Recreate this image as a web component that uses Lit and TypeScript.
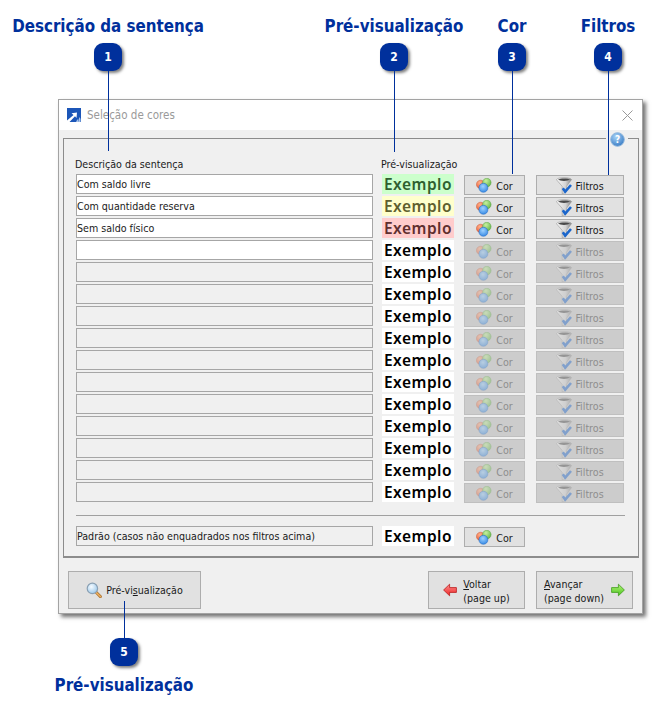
import { LitElement, html, css, svg } from "lit";
import { customElement } from "lit/decorators.js";

const colorIcon = svg`<svg class="ico" width="16" height="15" viewBox="0 0 16 15">
  <circle cx="4.6" cy="6.4" r="4.2" fill="url(#gr)" stroke="#c0502a" stroke-width=".4"/>
  <circle cx="10.8" cy="4.6" r="4.3" fill="url(#gg)" stroke="#4f9a3a" stroke-width=".4"/>
  <circle cx="7.4" cy="9.8" r="4.5" fill="url(#gb)" stroke="#1f69c4" stroke-width=".5"/>
</svg>`;
const filterIcon = svg`<svg class="ico" width="17" height="17" viewBox="0 0 17 17">
  <path d="M.4 2.6C1.5 0 14.5 0 15.6 2.6L10.4 9.4V15L6.2 16.8V9.4Z" fill="url(#gf)" stroke="#8a8a8a" stroke-width=".5"/>
  <path d="M2 2.6C4 1 12 1 14 2.6 12 4.4 4 4.4 2 2.6Z" fill="#4a4a4a"/>
  <path d="M6.8 11.2 9.2 14.6 15 8" fill="none" stroke="#1b66cc" stroke-width="2.6"/>
</svg>`;
const lensIcon = svg`<svg width="16" height="16" viewBox="0 0 16 16">
  <path d="M9.6 9.8 14.4 14.6" stroke="#b07a3a" stroke-width="3" stroke-linecap="round"/>
  <path d="M10 10.2 14.4 14.6" stroke="#f2b25e" stroke-width="1.3" stroke-linecap="round"/>
  <circle cx="6.4" cy="6.4" r="5.2" fill="url(#gl)" stroke="#8aa0b4" stroke-width="1.2"/>
</svg>`;
const leftArrow = svg`<svg width="14" height="14" viewBox="0 0 14 14"><path d="M.6 7 6.6 1.2v3.4h6.8v4.8H6.6v3.4Z" fill="url(#ga)" stroke="#b81c1c" stroke-width=".8"/></svg>`;
const rightArrow = svg`<svg width="14" height="14" viewBox="0 0 14 14"><path d="M13.4 7 7.4 1.2v3.4H.6v4.8h6.8v3.4Z" fill="url(#gc)" stroke="#3f9a1c" stroke-width=".8"/></svg>`;

type Row = { text: string; state: "on" | "empty" | "off"; tint: string };
const rows: Row[] = [
  { text: "Com saldo livre", state: "on", tint: "green" },
  { text: "Com quantidade reserva", state: "on", tint: "yellow" },
  { text: "Sem saldo físico", state: "on", tint: "red" },
  { text: "", state: "empty", tint: "" },
  ...Array.from({ length: 11 }, () => ({ text: "", state: "off" as const, tint: "" })),
];
const callouts = [
  { n: 1, title: "Descrição da sentença", x: 108, lineH: 80 },
  { n: 2, title: "Pré-visualização", x: 394, lineH: 81 },
  { n: 3, title: "Cor", x: 512, lineH: 103 },
  { n: 4, title: "Filtros", x: 608, lineH: 104 },
];

@customElement("app-root")
export class AppRoot extends LitElement {
  static styles = css`
    :host { display: block; position: relative; width: 667px; height: 713px; background: #fff; overflow: hidden;
      font-family: "DejaVu Sans", sans-serif; font-stretch: condensed; font-size: 10.6px; color: #1a1a1a; }
    .defs { position: absolute; width: 0; height: 0; }
    .win { position: absolute; left: 58px; top: 99px; width: 585px; height: 515px; box-sizing: border-box;
      background: #f0f0f0; border: 1px solid #a3a3a3; box-shadow: 3px 3px 4px rgba(0,0,0,.55);
      display: flex; flex-direction: column; }
    .title { flex: none; height: 30px; background: #fff; display: flex; align-items: center; padding: 0 9px 0 8px; gap: 6px;
      color: #9a9a9a; font-size: 11.5px; }
    .title .grow { flex: 1; }
    .body { flex: none; position: relative; margin: 8px 3px 0 4px; height: 420px; box-sizing: border-box;
      border: 1px solid #8c8c8c; border-bottom-width: 2px; padding: 12px 0 0 12px; }
    .help { position: absolute; right: 10px; top: -7px; width: 22px; height: 16px; background: #f0f0f0;
      display: flex; justify-content: center; }
    .heads { display: flex; height: 23px; align-items: flex-start; padding-top: 6px; box-sizing: border-box; line-height: 14px; }
    .heads .a { width: 306px; margin-left: -1px; }
    .rows { display: flex; flex-direction: column; gap: 2px; }
    .row { display: flex; height: 20px; }
    .field { flex: none; width: 297px; height: 20px; box-sizing: border-box; border: 1px solid #a6a6a6; background: #fff;
      line-height: 19px; padding-left: 0; white-space: nowrap; overflow: hidden; margin-right: 9px; }
    .field.off { background: #f0f0f0; }
    .sample { flex: none; width: 72px; height: 20px; background: #fff; color: #000; font: 600 15.5px/21px "Noto Sans", sans-serif;
      font-stretch: normal; text-align: center; margin-right: 10px; letter-spacing: .5px; overflow: hidden; }
    .sample.green { background: #ccffcc; color: #2f5f2f; }
    .sample.yellow { background: #ffffcc; color: #5f5f2f; }
    .sample.red { background: #ffcccc; color: #5f2f2f; }
    .btn { flex: none; margin-top: 1px; height: 20px; box-sizing: border-box; border: 1px solid #adadad; background: #e1e1e1;
      display: flex; align-items: center; justify-content: center; gap: 4px; color: #1a1a1a; }
    .btn span { position: relative; top: 1px; }
    .btn.cor { width: 61px; margin-right: 11px; }
    .btn.fil { width: 88px; gap: 2px; }
    .btn.dis { background: #cccccc; border-color: #bfbfbf; color: #8e8e8e; }
    .btn.dis .ico { opacity: .42; }
    .sep { height: 0; border-top: 1px solid #a0a0a0; margin: 13px 13px 10px 0; width: 549px; }
    .foot { flex: 1; display: flex; padding: 13px 0 0 9px; box-sizing: border-box; }
    .big { height: 38px; box-sizing: border-box; border: 1px solid #adadad; background: #e1e1e1; display: flex; align-items: center; flex: none; }
    .big.prev { width: 133px; justify-content: center; gap: 4px; margin-right: 227px; }
    .big.back { width: 97px; margin-right: 11px; justify-content: center; gap: 6px; line-height: 14px; padding-top: 2px; }
    .big.next { width: 97px; justify-content: center; gap: 7px; line-height: 14px; padding-top: 2px; }
    .big svg { flex: none; }
    .big.back svg, .big.next svg { position: relative; top: -1px; }
    .big u { text-decoration: underline; }
    .tag { position: absolute; left: 0; top: 0; display: flex; flex-direction: column; align-items: center; width: 0; }
    .h { font: bold 16.8px/22px "DejaVu Sans", sans-serif; font-stretch: condensed; color: #00309c; white-space: nowrap; }
    .badge { width: 28px; height: 28px; flex: none; border-radius: 9px; background: #00309c; color: #fff;
      box-shadow: 2px 2px 3px rgba(0,0,0,.5); font: bold 12px/28px "DejaVu Sans", sans-serif; font-stretch: condensed; text-align: center; }
    .line { width: 1px; flex: none; background: #00309c; }
    .h.top { margin-bottom: 6px; margin-top: 15px; }
    .h.bot { margin-top: 8px; }
  `;

  private tag(c: { n: number; title: string; x: number; lineH: number }) {
    return html`<div class="tag" style="left:${c.x}px">
      <div class="h top">${c.title}</div>
      <div class="badge">${c.n}</div>
      <div class="line" style="height:${c.lineH}px"></div>
    </div>`;
  }

  render() {
    return html`
      <svg class="defs"><defs>
        <radialGradient id="gr" cx=".4" cy=".3" r=".8"><stop offset="0" stop-color="#ffb08a"/><stop offset="1" stop-color="#e8502a"/></radialGradient>
        <radialGradient id="gg" cx=".4" cy=".3" r=".8"><stop offset="0" stop-color="#c8f0a0"/><stop offset="1" stop-color="#58b040"/></radialGradient>
        <radialGradient id="gb" cx=".45" cy=".35" r=".75"><stop offset="0" stop-color="#9ed2ff"/><stop offset="1" stop-color="#2a80e0"/></radialGradient>
        <linearGradient id="gf" x1="0" x2="1" y1="0" y2="0"><stop offset="0" stop-color="#fafafa"/><stop offset=".6" stop-color="#d4d4d4"/><stop offset="1" stop-color="#858585"/></linearGradient>
        <radialGradient id="gl" cx=".4" cy=".35" r=".8"><stop offset="0" stop-color="#f6fbff"/><stop offset="1" stop-color="#8cc0e8"/></radialGradient>
        <linearGradient id="ga" x1="0" x2="0" y1="0" y2="1"><stop offset="0" stop-color="#ff9090"/><stop offset="1" stop-color="#ee2424"/></linearGradient>
        <linearGradient id="gc" x1="0" x2="0" y1="0" y2="1"><stop offset="0" stop-color="#b8f57a"/><stop offset="1" stop-color="#46c41c"/></linearGradient>
        <radialGradient id="gh" cx=".4" cy=".3" r=".8"><stop offset="0" stop-color="#a8d4f8"/><stop offset="1" stop-color="#2f74c0"/></radialGradient>
      </defs></svg>
      <div class="win">
        <div class="title">
          <svg width="14" height="14" viewBox="0 0 14 14"><rect width="14" height="14" fill="#1c56b8"/>
            <path d="M0 12.5 6.5 7 4.5 5.2 10 4.5 9.5 10 8 8.3 2.5 14H0Z" fill="#fff"/><path d="M9 14l1.5-3 1 3ZM11.5 12l1-3 1 2v3h-2Z" fill="#a9c4ea"/></svg>
          <span>Seleção de cores</span>
          <span class="grow"></span>
          <svg width="11" height="11" viewBox="0 0 11 11"><path d="M.5.5l10 10M10.5.5l-10 10" stroke="#999" stroke-width="1"/></svg>
        </div>
        <div class="body">
          <div class="help"><svg width="15" height="15" viewBox="0 0 15 15"><circle cx="7.5" cy="7.5" r="6.8" fill="url(#gh)" stroke="#8fb6dc"/>
            <text x="7.5" y="11" text-anchor="middle" font-family="DejaVu Sans" font-weight="700" font-size="10" fill="#fff">?</text></svg></div>
          <div class="heads"><span class="a">Descrição da sentença</span><span>Pré-visualização</span></div>
          <div class="rows">
            ${rows.map((r) => html`<div class="row">
              <div class="field ${r.state === "off" ? "off" : ""}">${r.text}</div>
              <div class="sample ${r.tint}">Exemplo</div>
              <div class="btn cor ${r.state === "on" ? "" : "dis"}">${colorIcon}<span>Cor</span></div>
              <div class="btn fil ${r.state === "on" ? "" : "dis"}">${filterIcon}<span>Filtros</span></div>
            </div>`)}
          </div>
          <div class="sep"></div>
          <div class="row">
            <div class="field off">Padrão (casos não enquadrados nos filtros acima)</div>
            <div class="sample">Exemplo</div>
            <div class="btn cor">${colorIcon}<span>Cor</span></div>
          </div>
        </div>
        <div class="foot">
          <div class="big prev">${lensIcon}<span>Pré-vi<u>s</u>ualização</span></div>
          <div class="big back">${leftArrow}<span><u>V</u>oltar<br />(page up)</span></div>
          <div class="big next"><span><u>A</u>vançar<br />(page down)</span>${rightArrow}</div>
        </div>
      </div>
      ${callouts.map((c) => this.tag(c))}
      <div class="tag" style="left:124px;top:601px">
        <div class="line" style="height:37px"></div>
        <div class="badge">5</div>
        <div class="h bot">Pré-visualização</div>
      </div>
    `;
  }
}
